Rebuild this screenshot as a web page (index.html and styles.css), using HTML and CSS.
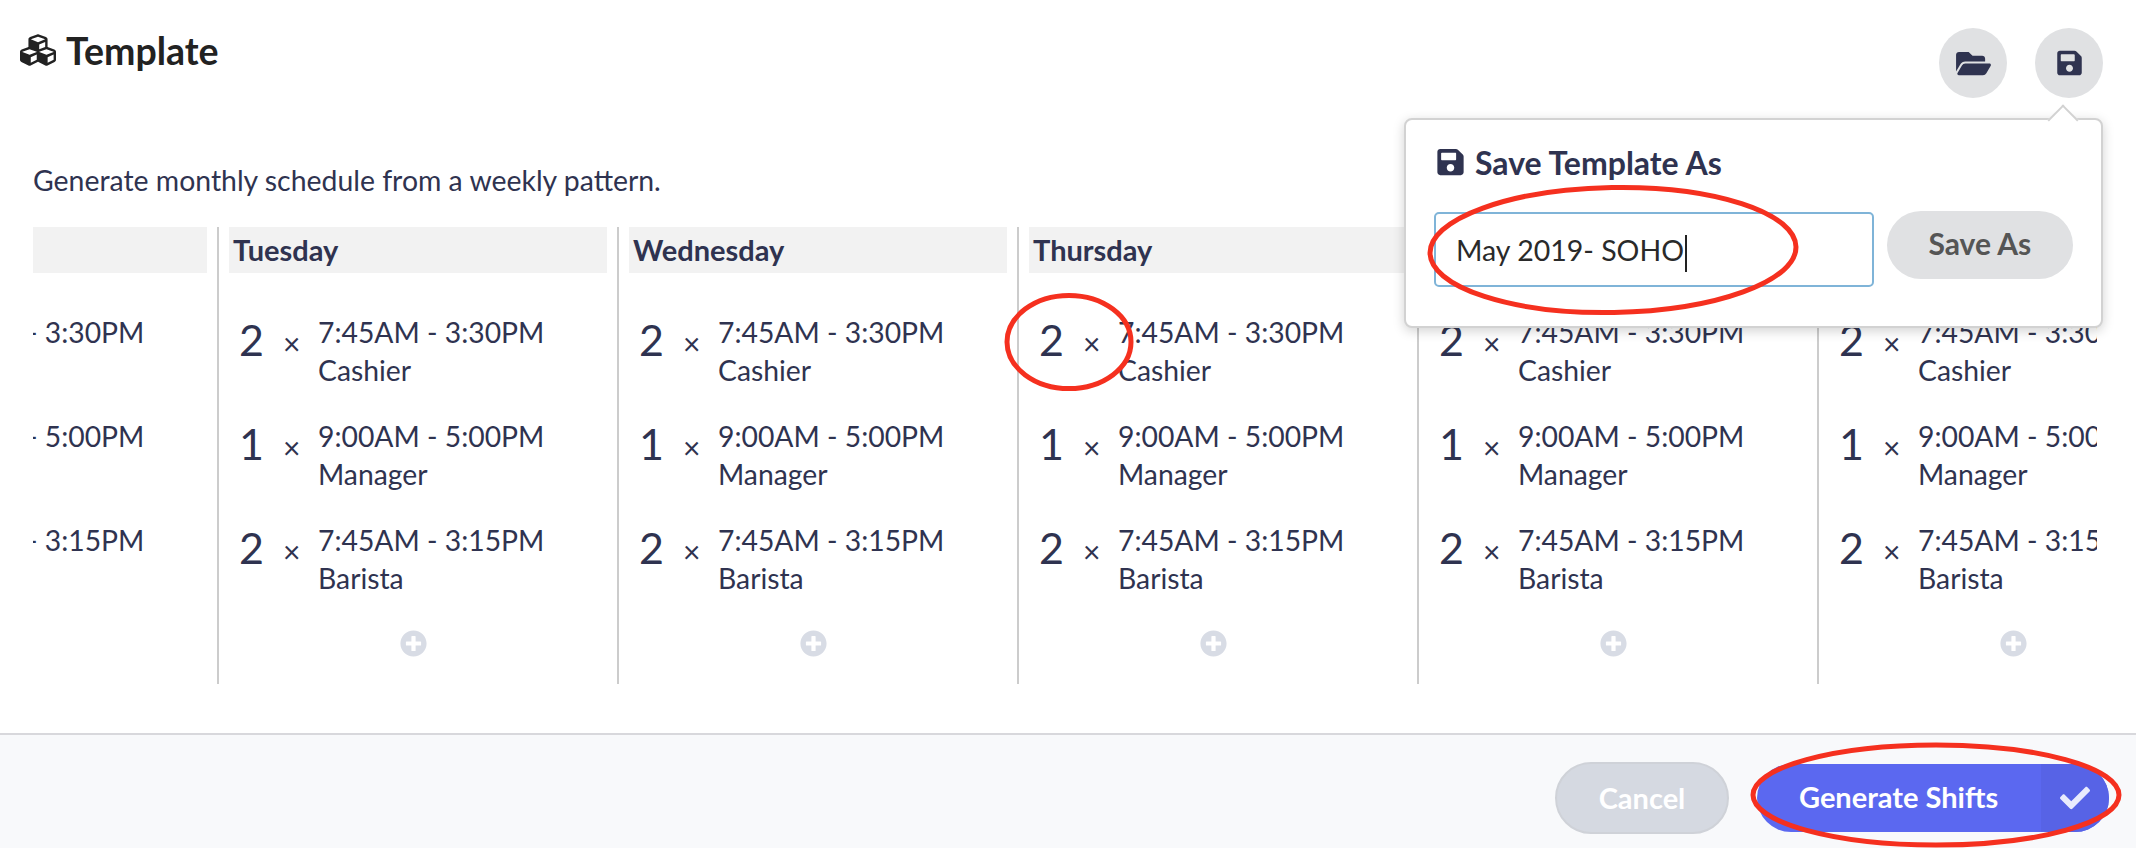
FILE: index.html
```html
<!DOCTYPE html>
<html>
<head>
    <meta charset="UTF-8">
    <title>Template</title>
    <link rel="stylesheet" href="styles.css">
</head>
<body>
    <svg class="defs" width="0" height="0">
        <symbol id="i-cubes" viewBox="0 0 512 512"><path d="M488.6 250.2L392 214V105.5c0-15-9.3-28.4-23.4-33.7l-100-37.5c-8.1-3.1-17.1-3.1-25.3 0l-100 37.5c-14.1 5.3-23.4 18.7-23.4 33.7V214l-96.6 36.2C9.3 255.5 0 268.9 0 283.9V394c0 13.6 7.7 26.1 19.9 32.2l100 50c10.1 5.1 22.1 5.1 32.2 0l103.9-52 103.9 52c10.1 5.1 22.1 5.1 32.2 0l100-50c12.2-6.1 19.9-18.6 19.9-32.2V283.9c0-15-9.3-28.4-23.4-33.7zM358 214.8l-85 31.9v-68.2l85-37v73.3zM154 104.1l102-38.2 102 38.2v.6l-102 41.4-102-41.4v-.6zm84 291.1l-85 42.5v-79.1l85-38.8v75.4zm0-112l-102 41.4-102-41.4v-.6l102-38.2 102 38.2v.6zm240 112l-85 42.5v-79.1l85-38.8v75.4zm0-112l-102 41.4-102-41.4v-.6l102-38.2 102 38.2v.6z"/></symbol>
        <symbol id="i-save" viewBox="0 0 448 512"><path d="M433.941 129.941l-83.882-83.882A48 48 0 0 0 316.118 32H48C21.49 32 0 53.49 0 80v352c0 26.51 21.49 48 48 48h352c26.51 0 48-21.49 48-48V163.882a48 48 0 0 0-14.059-33.941zM224 416c-35.346 0-64-28.654-64-64 0-35.346 28.654-64 64-64s64 28.654 64 64c0 35.346-28.654 64-64 64zm96-304.52V212c0 6.627-5.373 12-12 12H76c-6.627 0-12-5.373-12-12V108c0-6.627 5.373-12 12-12h228.52c3.183 0 6.235 1.264 8.485 3.515l3.48 3.48A11.996 11.996 0 0 1 320 111.48z"/></symbol>
        <symbol id="i-open" viewBox="0 0 576 512"><path d="M572.694 292.093L500.27 416.248A63.997 63.997 0 0 1 444.989 448H45.025c-18.523 0-30.064-20.093-20.731-36.093l72.424-124.155A64 64 0 0 1 152 256h399.964c18.523 0 30.064 20.093 20.73 36.093zM152 224h328v-48c0-26.51-21.49-48-48-48H272l-64-64H48C21.49 64 0 85.49 0 112v278.046l69.077-118.418C86.214 242.25 117.989 224 152 224z"/></symbol>
        <symbol id="i-plus" viewBox="0 0 512 512"><path d="M256 8C119 8 8 119 8 256s111 248 248 248 248-111 248-248S393 8 256 8zm144 276c0 6.6-5.4 12-12 12h-92v92c0 6.6-5.4 12-12 12h-56c-6.6 0-12-5.4-12-12v-92h-92c-6.6 0-12-5.4-12-12v-56c0-6.6 5.4-12 12-12h92v-92c0-6.6 5.4-12 12-12h56c6.6 0 12 5.4 12 12v92h92c6.6 0 12 5.4 12 12v56z"/></symbol>
        <symbol id="i-check" viewBox="0 0 512 512"><path d="M173.898 439.404l-166.4-166.4c-9.997-9.997-9.997-26.206 0-36.204l36.203-36.204c9.997-9.998 26.207-9.998 36.204 0L192 312.69 432.095 72.596c9.997-9.997 26.207-9.997 36.204 0l36.203 36.204c9.997 9.997 9.997 26.206 0 36.204l-294.4 294.401c-9.998 9.997-26.207 9.997-36.204-.001z"/></symbol>
    </svg>

    <div class="page">
        <div class="head">
            <h1 class="title"><svg class="title-icon"><use href="#i-cubes"/></svg>Template</h1>
            <div class="tools">
                <button class="round"><svg class="open-icon"><use href="#i-open"/></svg></button>
                <button class="round"><svg class="save-icon"><use href="#i-save"/></svg></button>
            </div>
        </div>

        <p class="desc">Generate monthly schedule from a weekly pattern.</p>

        <div class="board">
            <div class="track">
                <div class="col">
                    <div class="day">&nbsp;</div>
                    <div class="shift"><span class="num">2</span><span class="times">×</span><div class="info"><div>7:45AM - 3:30PM</div><div>Cashier</div></div></div>
                    <div class="shift"><span class="num">1</span><span class="times">×</span><div class="info"><div>9:00AM - 5:00PM</div><div>Manager</div></div></div>
                    <div class="shift"><span class="num">2</span><span class="times">×</span><div class="info"><div>7:45AM - 3:15PM</div><div>Barista</div></div></div>
                    <svg class="add"><use href="#i-plus"/></svg>
                </div>
                <div class="col">
                    <div class="day">Tuesday</div>
                    <div class="shift"><span class="num">2</span><span class="times">×</span><div class="info"><div>7:45AM - 3:30PM</div><div>Cashier</div></div></div>
                    <div class="shift"><span class="num">1</span><span class="times">×</span><div class="info"><div>9:00AM - 5:00PM</div><div>Manager</div></div></div>
                    <div class="shift"><span class="num">2</span><span class="times">×</span><div class="info"><div>7:45AM - 3:15PM</div><div>Barista</div></div></div>
                    <svg class="add"><use href="#i-plus"/></svg>
                </div>
                <div class="col">
                    <div class="day">Wednesday</div>
                    <div class="shift"><span class="num">2</span><span class="times">×</span><div class="info"><div>7:45AM - 3:30PM</div><div>Cashier</div></div></div>
                    <div class="shift"><span class="num">1</span><span class="times">×</span><div class="info"><div>9:00AM - 5:00PM</div><div>Manager</div></div></div>
                    <div class="shift"><span class="num">2</span><span class="times">×</span><div class="info"><div>7:45AM - 3:15PM</div><div>Barista</div></div></div>
                    <svg class="add"><use href="#i-plus"/></svg>
                </div>
                <div class="col">
                    <div class="day">Thursday</div>
                    <div class="shift"><span class="num">2</span><span class="times">×</span><div class="info"><div>7:45AM - 3:30PM</div><div>Cashier</div></div></div>
                    <div class="shift"><span class="num">1</span><span class="times">×</span><div class="info"><div>9:00AM - 5:00PM</div><div>Manager</div></div></div>
                    <div class="shift"><span class="num">2</span><span class="times">×</span><div class="info"><div>7:45AM - 3:15PM</div><div>Barista</div></div></div>
                    <svg class="add"><use href="#i-plus"/></svg>
                </div>
                <div class="col">
                    <div class="day">Friday</div>
                    <div class="shift"><span class="num">2</span><span class="times">×</span><div class="info"><div>7:45AM - 3:30PM</div><div>Cashier</div></div></div>
                    <div class="shift"><span class="num">1</span><span class="times">×</span><div class="info"><div>9:00AM - 5:00PM</div><div>Manager</div></div></div>
                    <div class="shift"><span class="num">2</span><span class="times">×</span><div class="info"><div>7:45AM - 3:15PM</div><div>Barista</div></div></div>
                    <svg class="add"><use href="#i-plus"/></svg>
                </div>
                <div class="col">
                    <div class="day">Saturday</div>
                    <div class="shift"><span class="num">2</span><span class="times">×</span><div class="info"><div>7:45AM - 3:30PM</div><div>Cashier</div></div></div>
                    <div class="shift"><span class="num">1</span><span class="times">×</span><div class="info"><div>9:00AM - 5:00PM</div><div>Manager</div></div></div>
                    <div class="shift"><span class="num">2</span><span class="times">×</span><div class="info"><div>7:45AM - 3:15PM</div><div>Barista</div></div></div>
                    <svg class="add"><use href="#i-plus"/></svg>
                </div>
            </div>
        </div>

        <div class="foot">
            <button class="cancel">Cancel</button>
            <button class="generate"><span class="generate-label">Generate Shifts</span><span class="generate-check"><svg class="check-icon"><use href="#i-check"/></svg></span></button>
        </div>

        <div class="popover">
            <div class="pop-title"><svg class="pop-icon"><use href="#i-save"/></svg>Save Template As</div>
            <div class="pop-form">
                <div class="name-input">May 2019- SOHO<span class="caret"></span></div>
                <button class="save-as">Save As</button>
            </div>
        </div>

        <!-- red marks drawn on top of the screenshot -->
        <svg class="marks" width="2136" height="848" viewBox="0 0 2136 848">
            <ellipse cx="1613" cy="250" rx="183" ry="62.5" transform="rotate(-1 1613 250)"/>
            <ellipse cx="1069" cy="342" rx="62" ry="46.5"/>
            <ellipse cx="1936" cy="795" rx="183" ry="50"/>
        </svg>
    </div>
</body>
</html>
```

FILE: styles.css
```css
* {
    box-sizing: border-box;
}
body {
    margin: 0;
    font-family: "Lato", "Liberation Sans", sans-serif;
    color: #2f3350;
    background: #fff;
}
button {
    font-family: inherit;
    border: 0;
    padding: 0;
}
.defs {
    display: block;
    height: 0;
}
.page {
    position: relative;
    width: 2136px;
    height: 848px;
    overflow: hidden;
    display: flex;
    flex-direction: column;
}

/* header */
.head {
    display: flex;
    justify-content: space-between;
    align-items: flex-start;
    height: 161px;
    padding: 28px 33px 0 20px;
}
.title {
    display: flex;
    align-items: center;
    margin: 4px 0 0;
    height: 36px;
    font-size: 37.5px;
    font-weight: 700;
    color: #222;
}
.title-icon {
    width: 36px;
    height: 36px;
    margin-right: 10px;
    fill: #222;
}
.tools {
    display: flex;
    gap: 28px;
}
.round {
    display: flex;
    align-items: center;
    justify-content: center;
    width: 68px;
    height: 70px;
    border-radius: 50%;
    background: #e0e1e3;
}
.open-icon {
    width: 35px;
    height: 31px;
    fill: #2f3350;
}
.save-icon {
    width: 25px;
    height: 28px;
    fill: #2f3350;
}
.desc {
    margin: 0;
    padding-left: 33px;
    height: 66px;
    line-height: 38px;
    font-size: 28.4px;
}

/* week columns */
.board {
    flex: 1;
    width: 2064px;
    margin-left: 33px;
    overflow: hidden;
}
.track {
    display: flex;
    margin-left: -216px;
}
.col {
    flex: none;
    width: 400px;
    height: 457px;
    padding: 0 10px;
    border-left: 2px solid #ccc;
}
.day {
    height: 46px;
    line-height: 46px;
    padding-left: 4px;
    margin-bottom: 40px;
    background: #f2f2f2;
    font-size: 29px;
    font-weight: 700;
}
.shift {
    display: flex;
    align-items: center;
    height: 76px;
    margin-bottom: 28px;
    padding-left: 10px;
}
.num {
    width: 44px;
    height: 76px;
    font-size: 43px;
    font-weight: 400;
    line-height: 54px;
}
.times {
    width: 35px;
    font-size: 30px;
    padding-bottom: 16px;
}
.info {
    font-size: 28.3px;
    line-height: 38px;
    white-space: nowrap;
}
.add {
    display: block;
    width: 27px;
    height: 27px;
    margin: 33px 0 0 171px;
    fill: #d8dce5;
}

/* footer */
.foot {
    flex: none;
    display: flex;
    justify-content: flex-end;
    align-items: center;
    gap: 28px;
    height: 115px;
    padding: 13px 27px 0 0;
    border-top: 2px solid #d8d8dc;
    background: #f8f9fb;
}
.cancel {
    width: 174px;
    height: 72px;
    border: 2px solid #cfd2d8;
    border-radius: 36px;
    background: #d5d9e1;
    color: #fff;
    font-size: 29px;
    font-weight: 700;
    padding-bottom: 2px;
}
.generate {
    display: flex;
    width: 352px;
    height: 68px;
    border-radius: 34px;
    overflow: hidden;
    background: #5b68f0;
    color: #fff;
    font-size: 29px;
    font-weight: 700;
}
.generate-label {
    flex: 1;
    line-height: 66px;
    text-align: left;
    padding-left: 42px;
}
.generate-check {
    display: flex;
    align-items: center;
    justify-content: center;
    width: 68px;
    background: #5763e6;
}
.check-icon {
    width: 30px;
    height: 30px;
    fill: #e9ebfd;
}

/* save popover */
.popover {
    position: absolute;
    top: 118px;
    right: 33px;
    width: 699px;
    height: 210px;
    padding: 24px 28px;
    background: #fff;
    border: 2px solid #d2d2d2;
    border-radius: 8px;
    box-shadow: 0 3px 12px rgba(0, 0, 0, .18);
}
.popover::before {
    content: "";
    position: absolute;
    top: -11px;
    right: 27px;
    width: 20px;
    height: 20px;
    background: #fff;
    border-top: 2px solid #d2d2d2;
    border-left: 2px solid #d2d2d2;
    transform: rotate(45deg);
}
.pop-title {
    display: flex;
    align-items: center;
    height: 36px;
    margin-left: 3px;
    font-size: 32px;
    font-weight: 700;
}
.pop-icon {
    width: 27px;
    height: 30px;
    margin-right: 11px;
    fill: #2f3350;
}
.pop-form {
    display: flex;
    align-items: flex-start;
    gap: 13px;
    margin-top: 31px;
}
.name-input {
    width: 441px;
    height: 75px;
    margin-top: 1px;
    line-height: 73px;
    padding-left: 20px;
    border: 2px solid #7fb4d8;
    border-radius: 5px;
    font-size: 28.5px;
    color: #2a2a2a;
}
.caret {
    display: inline-block;
    width: 2px;
    height: 37px;
    margin-left: 1px;
    vertical-align: middle;
    background: #222;
}
.save-as {
    width: 187px;
    height: 68px;
    border-radius: 34px;
    background: #e0e1e3;
    color: #555;
    font-size: 30px;
    font-weight: 700;
    padding-bottom: 5px;
}

/* red circles */
.marks {
    position: absolute;
    top: 0;
    left: 0;
    pointer-events: none;
}
.marks ellipse {
    fill: none;
    stroke: #f5301f;
    stroke-width: 5;
}
```
